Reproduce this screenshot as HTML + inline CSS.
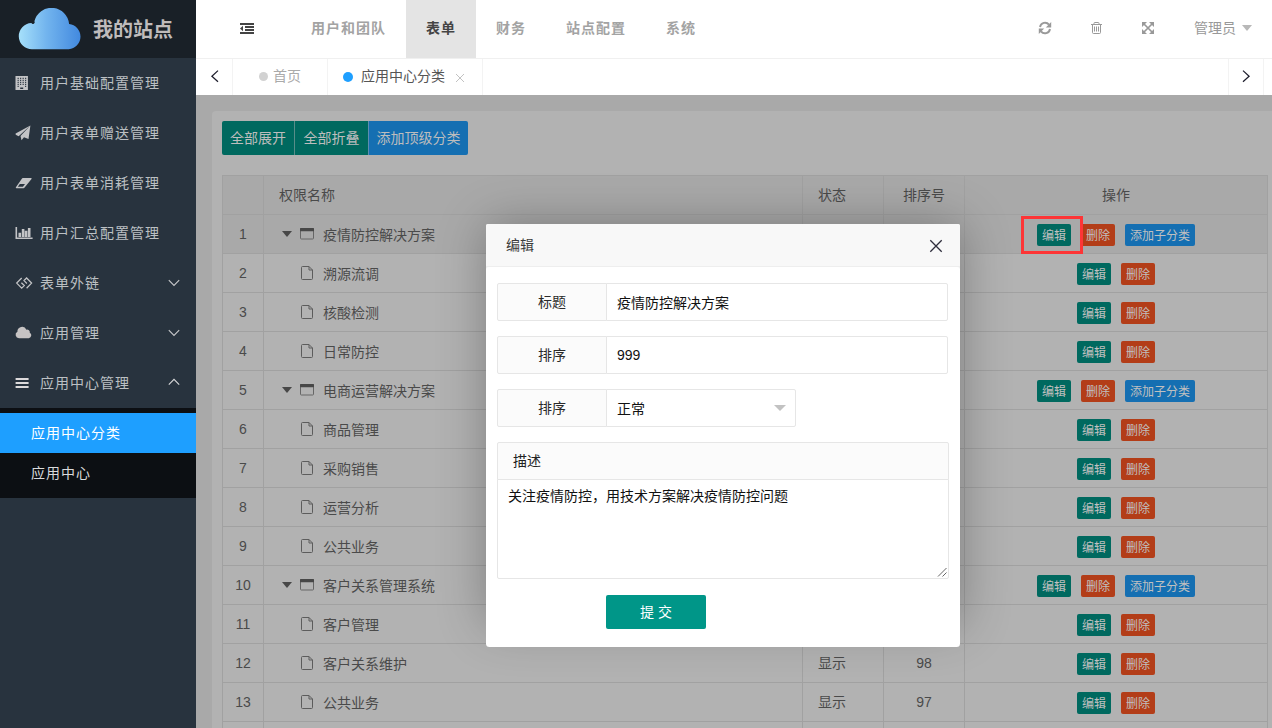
<!DOCTYPE html>
<html lang="zh-CN">
<head>
<meta charset="utf-8">
<title>我的站点</title>
<style>
*{box-sizing:border-box;margin:0;padding:0}
html,body{width:1272px;height:728px;overflow:hidden;background:#a9a9a9}
body{font-family:"Liberation Sans","Noto Sans CJK SC",sans-serif;font-size:14px;color:#333;position:relative;line-height:24px}
.abs{position:absolute}
/* sidebar */
#side{position:absolute;left:0;top:0;width:196px;height:728px;background:#28333e}
#logo{position:absolute;left:0;top:0;width:196px;height:58px;background:#192027}
#logo h1{position:absolute;left:93px;top:2px;line-height:57px;font-size:20px;font-weight:bold;color:#bfbbbb;white-space:nowrap}
.mi{position:absolute;left:0;width:196px;height:50px;line-height:50px;color:#bcc0c3;font-size:14px;letter-spacing:1px;white-space:nowrap}
.mi span{position:absolute;left:40px;top:0}
.mi svg{position:absolute}
#child{position:absolute;left:0;top:408px;width:196px;height:90px;background:#0c0f13}
.ci{position:absolute;left:0;width:196px;height:40px;line-height:40px;padding-left:31px;color:#d9dadb;font-size:14px;letter-spacing:1px}
.ci.on{background:#1e9fff;color:#fff}
/* header */
#head{position:absolute;left:196px;top:0;width:1076px;height:58px;background:#fff}
.nav{position:absolute;top:0;height:58px;line-height:57px;font-size:14px;font-weight:bold;letter-spacing:1px;color:#a3a3a3;text-align:center;white-space:nowrap}
.nav.on{background:#e4e4e4;color:#444}
/* tabs */
#tabs{position:absolute;left:196px;top:58px;width:1076px;height:37px;background:#fff;border-top:1px solid #f0f0f0}
.tab{position:absolute;top:0;height:36px;line-height:35px;border-right:1px solid #f3f3f3;font-size:14px;white-space:nowrap}
/* content (darkened by shade) */
#main{position:absolute;left:212px;top:111px;width:1060px;height:617px;background:#b2b2b2;border-radius:4px 0 0 0}
.tbtn{position:absolute;top:121px;height:34px;line-height:34px;color:#bdbdbd;font-size:14px;text-align:center;white-space:nowrap}
.g{background:#00695f}.b{background:#156fb2}.r{background:#b33d18}
table{position:absolute;left:222px;top:175px;border-collapse:collapse;table-layout:fixed;width:1045px;color:#4a4a4a;font-size:14px}
td,th{border:1px solid #a1a1a1;height:39px;padding:0 15px;font-weight:normal;text-align:left;white-space:nowrap;overflow:hidden;line-height:20px}
th{background:#a9a9a9}
td.c,th.c{text-align:center;padding:0}
.xs{display:inline-block;height:22px;line-height:24px;padding:0 5px;font-size:12px;color:#c0c0c0;border-radius:2px;vertical-align:middle;position:relative;top:1px}
.xs+.xs{margin-left:10px}
/* modal */
#modal{position:absolute;left:486px;top:224px;width:474px;height:400px;background:#f0f0f0;border-radius:2px;box-shadow:1px 1px 50px rgba(0,0,0,.3)}
#mt{position:absolute;left:0;top:0;width:474px;height:43px;background:#f8f8f8;border-bottom:1px solid #eee;border-radius:2px 2px 0 0;line-height:42px;padding-left:20px;font-size:14px;color:#3c3c3c}
.lab{position:absolute;left:11px;width:110px;height:38px;border:1px solid #e6e6e6;background:#fbfbfb;text-align:center;line-height:37px;color:#2a2a2a;border-radius:2px 0 0 2px}
.inp{position:absolute;left:120px;height:38px;border:1px solid #e6e6e6;background:#fff;line-height:36px;padding-left:10px;color:#111;border-radius:0 2px 2px 0}
td.nm{position:relative;padding:0}
td.nm span{position:absolute;left:59px;top:10px;line-height:20px}
td.nm .ti{position:absolute;top:13px}
td.nm .tri{position:absolute;left:17.7px;top:16px;width:0;height:0;border:5.7px solid transparent;border-top:6.2px solid #474747;border-bottom:0}
tr.hv td{background:#a9a9a9}
#redbox{position:absolute;left:1021px;top:216px;width:62px;height:38px;border:3px solid #fd3536}
#ta-l{position:absolute;left:11px;top:218px;width:452px;height:38px;border:1px solid #e6e6e6;background:#fbfbfb;line-height:36px;padding-left:15px;color:#222;border-radius:2px 2px 0 0}
#ta{position:absolute;left:11px;top:255px;width:452px;height:100px;border:1px solid #e6e6e6;background:#fff;line-height:20px;padding:6px 10px;color:#111;border-radius:0 0 2px 2px}
#sub{position:absolute;left:120px;top:371px;width:100px;height:34px;line-height:34px;background:#009688;color:#fff;text-align:center;border-radius:2px;font-size:14px}
</style>
</head>
<body>
<div id="side">
  <div id="logo">
    <svg class="abs" style="left:18px;top:8px" width="64" height="42" viewBox="18 8 64 42">
      <defs><linearGradient id="cg" x1="0" y1="0" x2="1" y2="0"><stop offset="0" stop-color="#a6e0fa"/><stop offset="0.45" stop-color="#72b4ee"/><stop offset="1" stop-color="#4289df"/></linearGradient></defs>
      <path transform="translate(0.65 0.36) scale(0.992 0.9927)" fill="url(#cg)" d="M32 49.3 A13.2 13.2 0 0 1 31 22.9 A1.5 1.5 0 0 0 34 21 A17.8 17.8 0 0 1 69 23.8 A12.8 12.8 0 0 1 68.6 49.3 Z"/>
    </svg>
    <h1>我的站点</h1>
  </div>
  <div class="mi" style="top:58px"><span>用户基础配置管理</span></div>
  <div class="mi" style="top:108px"><span>用户表单赠送管理</span></div>
  <div class="mi" style="top:158px"><span>用户表单消耗管理</span></div>
  <div class="mi" style="top:208px"><span>用户汇总配置管理</span></div>
  <div class="mi" style="top:258px"><span>表单外链</span></div>
  <div class="mi" style="top:308px"><span>应用管理</span></div>
  <div class="mi" style="top:358px"><span>应用中心管理</span></div>

  <svg class="abs" style="left:15px;top:75px" width="14" height="16" viewBox="15 75 14 16"><path fill="#c3c4c6" fill-rule="evenodd" d="M15.5 76h12.4v14H15.5z M17.6 77.8h1.1v1.1h-1.1z M20.1 77.8h1.1v1.1h-1.1z M22.6 77.8h1.1v1.1h-1.1z M25.1 77.8h1.1v1.1h-1.1z M17.6 79.8h1.1v1.1h-1.1z M20.1 79.8h1.1v1.1h-1.1z M22.6 79.8h1.1v1.1h-1.1z M25.1 79.8h1.1v1.1h-1.1z M17.6 81.8h1.1v1.1h-1.1z M20.1 81.8h1.1v1.1h-1.1z M22.6 81.8h1.1v1.1h-1.1z M25.1 81.8h1.1v1.1h-1.1z M17.6 83.8h1.1v1.1h-1.1z M20.1 83.8h1.1v1.1h-1.1z M22.6 83.8h1.1v1.1h-1.1z M25.1 83.8h1.1v1.1h-1.1z M17.6 85.8h1.1v1.1h-1.1z M25.1 85.8h1.1v1.1h-1.1z M20.2 87.4h3v1.6h-3z"/></svg>
  <svg class="abs" style="left:15px;top:125px" width="17" height="16" viewBox="15 125 17 16"><path fill="#c3c4c6" d="M15.6 133.5 L30.4 125.6 L20 135 L18.6 136.2 L15.7 134.8 Z M30.4 125.6 L28.5 139 L24 137.3 L21.5 140.2 L20.5 136 Z"/></svg>
  <svg class="abs" style="left:15px;top:177px" width="18" height="12" viewBox="15 177 18 12"><path fill="#c3c4c6" fill-rule="evenodd" d="M23 177.9 H31 A0.6 0.6 0 0 1 31.5 178.9 L24.4 187.8 A1 1 0 0 1 23.6 188.2 H16.4 A0.6 0.6 0 0 1 15.9 187.2 L22.2 178.3 A1 1 0 0 1 23 177.9 Z M19.8 184 H25 L22.9 186.8 H17.8 Z"/></svg>
  <svg class="abs" style="left:15px;top:226px" width="18" height="14" viewBox="15 226 18 14"><path fill="#c3c4c6" d="M15.5 227h1.6v10.6H32.6v1.4H15.5z M18.5 232.8h2.6V237h-2.6z M21.8 228.9h2.6V237h-2.6z M24.8 230.8h2.6V237h-2.6z M27.9 227.9h2.6V237h-2.6z"/></svg>
  <svg class="abs" style="left:15px;top:276px" width="18" height="14" viewBox="15 276 18 14"><path fill="none" stroke="#c3c4c6" stroke-width="1.25" d="M21.7 278 L16.7 283.1 L21.7 288.2 L24.3 285.6 L21.4 282.7 M26.6 288.2 L31.6 283.1 L26.6 278 L24 280.6 L26.9 283.5"/></svg>
  <svg class="abs" style="left:15px;top:325px" width="18" height="14" viewBox="15 325 18 14"><path fill="#c6c3c3" d="M19 338.2 A3.4 3.4 0 0 1 17.4 331.8 A4.7 4.7 0 0 1 26.4 329.7 A2.8 2.8 0 0 1 29.8 332.8 A2.9 2.9 0 0 1 28.8 338.2 Z"/></svg>
  <svg class="abs" style="left:15px;top:377px" width="14" height="12" viewBox="15 377 14 12"><path fill="#dcdadb" d="M15.6 378h13v2.1h-13z M15.6 382h13v2.1h-13z M15.6 386h13v2.1h-13z"/></svg>
  <svg class="abs" style="left:168px;top:279px" width="12" height="8" viewBox="0 0 12 8"><path fill="none" stroke="#c8c9cb" stroke-width="1.1" d="M0.8 1.2 L6 6.4 L11.2 1.2"/></svg>
  <svg class="abs" style="left:168px;top:329px" width="12" height="8" viewBox="0 0 12 8"><path fill="none" stroke="#c8c9cb" stroke-width="1.1" d="M0.8 1.2 L6 6.4 L11.2 1.2"/></svg>
  <svg class="abs" style="left:168px;top:378px" width="12" height="8" viewBox="0 0 12 8"><path fill="none" stroke="#d8d9da" stroke-width="1.1" d="M0.8 6.6 L6 1.4 L11.2 6.6"/></svg>
  <div id="child">
    <div class="ci on" style="top:5px">应用中心分类</div>
    <div class="ci" style="top:45px">应用中心</div>
  </div>
</div>

<div id="head">
  <svg class="abs" style="left:43px;top:22px" width="16" height="13" viewBox="239 22 16 13"><path fill="#444" d="M240 23h14v2h-14z M245 26h9v2h-9z M245 29h9v2h-9z M240 32h14v2h-14z M240 28.5 L243 25.8 V31.2 Z"/></svg>
  <svg class="abs" style="left:842px;top:21px" width="14" height="14" viewBox="1038 21 14 14"><g fill="none" stroke="#999" stroke-width="1.9"><path d="M1040 27 A5.1 5.1 0 0 1 1049 24.6"/><path d="M1050 29 A5.1 5.1 0 0 1 1041 31.4"/></g><path fill="#999" d="M1051.2 22 V27.4 H1045.8 Z M1038.8 34 V28.6 H1044.2 Z"/></svg>
  <svg class="abs" style="left:894px;top:21px" width="14" height="14" viewBox="1090 21 14 14"><g fill="none" stroke="#999" stroke-width="1"><path d="M1091 24.5 H1102 M1094 24.5 V23.3 A0.8 0.8 0 0 1 1094.8 22.5 H1098.2 A0.8 0.8 0 0 1 1099 23.3 V24.5 M1092.5 24.5 V32.5 A1 1 0 0 0 1093.5 33.5 H1099.5 A1 1 0 0 0 1100.5 32.5 V24.5 M1094.5 26.5 V31.5 M1096.5 26.5 V31.5 M1098.5 26.5 V31.5"/></g></svg>
  <svg class="abs" style="left:945px;top:21px" width="14" height="14" viewBox="1141 21 14 14"><path fill="#999" d="M1142 22 H1147 L1142 27 Z M1154 22 V27 L1149 22 Z M1142 34 V29 L1147 34 Z M1154 34 H1149 L1154 29 Z"/><path stroke="#999" stroke-width="1.7" d="M1144 24 L1152 32 M1152 24 L1144 32"/></svg>
  <i class="abs" style="left:1045.5px;top:25px;width:0;height:0;border:5.7px solid transparent;border-top:6px solid #b8b8b8;border-bottom:0"></i>

  <div class="nav" style="left:95px;width:115px">用户和团队</div>
  <div class="nav on" style="left:210px;width:70px">表单</div>
  <div class="nav" style="left:280px;width:70px">财务</div>
  <div class="nav" style="left:350px;width:100px">站点配置</div>
  <div class="nav" style="left:450px;width:70px">系统</div>
  <div class="nav" style="left:998px;width:42px;font-weight:normal;letter-spacing:0;color:#999">管理员</div>
</div>

<div id="tabs">
  <svg class="abs" style="left:13px;top:10px" width="12" height="16" viewBox="0 0 12 16"><path fill="none" stroke="#1d1d2c" stroke-width="1.25" d="M9 1.6 L2.9 7.2 L9 12.8"/></svg>
  <svg class="abs" style="left:1044px;top:10px" width="12" height="16" viewBox="0 0 12 16"><path fill="none" stroke="#1d1d2c" stroke-width="1.25" d="M3 1.6 L9.1 7.2 L3 12.8"/></svg>
  <i class="abs" style="left:63px;top:13px;width:9px;height:9px;border-radius:50%;background:#d2d2d2"></i>
  <i class="abs" style="left:146.5px;top:12.5px;width:10px;height:10px;border-radius:50%;background:#1e9fff"></i>
  <svg class="abs" style="left:259px;top:14px" width="10" height="10" viewBox="0 0 10 10"><path fill="none" stroke="#c2c2c2" stroke-width="1" d="M1 1 L9 9 M9 1 L1 9"/></svg>

  <div class="tab" style="left:0;width:37px"></div>
  <div class="tab" style="left:37px;width:95px;color:#aaa"><span class="abs" style="left:40px">首页</span></div>
  <div class="tab" style="left:132px;width:155px;color:#555"><span class="abs" style="left:33px">应用中心分类</span></div>
  <div class="tab" style="left:1032px;width:36px;border-left:1px solid #f3f3f3"></div>
</div>

<div id="main"></div>
<div class="tbtn g" style="left:222px;width:72px;border-radius:2px 0 0 2px">全部展开</div>
<div class="tbtn g" style="left:294px;width:74px;border-left:1px solid #598d89">全部折叠</div>
<div class="tbtn b" style="left:368px;width:100px;border-radius:0 2px 2px 0;border-left:1px solid #5c8db0">添加顶级分类</div>

<table>
<colgroup><col style="width:41px"><col style="width:539px"><col style="width:81px"><col style="width:81px"><col style="width:303px"></colgroup>
<tr><th></th><th>权限名称</th><th>状态</th><th class="c">排序号</th><th class="c">操作</th></tr>
<tr class="hv"><td class="c">1</td><td class="nm"><i class="tri"></i><svg class="ti" style="left:36px" width="14" height="12" viewBox="0 0 14 12"><rect x="0.5" y="0.5" width="13" height="10.5" rx="0.8" fill="none" stroke="#666"/><rect x="0" y="0" width="14" height="3.2" rx="0.6" fill="#474747"/></svg><span>疫情防控解决方案</span></td><td>显示</td><td class="c">999</td><td class="c"><span class="xs g">编辑</span><span class="xs r">删除</span><span class="xs b">添加子分类</span></td></tr>
<tr><td class="c">2</td><td class="nm"><svg class="ti" style="left:37px;top:12px" width="12" height="14" viewBox="0 0 12 14"><path d="M1.5 0.5 H8 L11.5 4 V12.5 A1 1 0 0 1 10.5 13.5 H1.5 A1 1 0 0 1 0.5 12.5 V1.5 A1 1 0 0 1 1.5 0.5 Z M8 0.5 V4 H11.5" fill="none" stroke="#5c5c5c"/></svg><span>溯源流调</span></td><td>显示</td><td class="c">99</td><td class="c"><span class="xs g">编辑</span><span class="xs r">删除</span></td></tr>
<tr><td class="c">3</td><td class="nm"><svg class="ti" style="left:37px;top:12px" width="12" height="14" viewBox="0 0 12 14"><path d="M1.5 0.5 H8 L11.5 4 V12.5 A1 1 0 0 1 10.5 13.5 H1.5 A1 1 0 0 1 0.5 12.5 V1.5 A1 1 0 0 1 1.5 0.5 Z M8 0.5 V4 H11.5" fill="none" stroke="#5c5c5c"/></svg><span>核酸检测</span></td><td>显示</td><td class="c">98</td><td class="c"><span class="xs g">编辑</span><span class="xs r">删除</span></td></tr>
<tr><td class="c">4</td><td class="nm"><svg class="ti" style="left:37px;top:12px" width="12" height="14" viewBox="0 0 12 14"><path d="M1.5 0.5 H8 L11.5 4 V12.5 A1 1 0 0 1 10.5 13.5 H1.5 A1 1 0 0 1 0.5 12.5 V1.5 A1 1 0 0 1 1.5 0.5 Z M8 0.5 V4 H11.5" fill="none" stroke="#5c5c5c"/></svg><span>日常防控</span></td><td>显示</td><td class="c">97</td><td class="c"><span class="xs g">编辑</span><span class="xs r">删除</span></td></tr>
<tr><td class="c">5</td><td class="nm"><i class="tri"></i><svg class="ti" style="left:36px" width="14" height="12" viewBox="0 0 14 12"><rect x="0.5" y="0.5" width="13" height="10.5" rx="0.8" fill="none" stroke="#666"/><rect x="0" y="0" width="14" height="3.2" rx="0.6" fill="#474747"/></svg><span>电商运营解决方案</span></td><td>显示</td><td class="c">998</td><td class="c"><span class="xs g">编辑</span><span class="xs r">删除</span><span class="xs b">添加子分类</span></td></tr>
<tr><td class="c">6</td><td class="nm"><svg class="ti" style="left:37px;top:12px" width="12" height="14" viewBox="0 0 12 14"><path d="M1.5 0.5 H8 L11.5 4 V12.5 A1 1 0 0 1 10.5 13.5 H1.5 A1 1 0 0 1 0.5 12.5 V1.5 A1 1 0 0 1 1.5 0.5 Z M8 0.5 V4 H11.5" fill="none" stroke="#5c5c5c"/></svg><span>商品管理</span></td><td>显示</td><td class="c">99</td><td class="c"><span class="xs g">编辑</span><span class="xs r">删除</span></td></tr>
<tr><td class="c">7</td><td class="nm"><svg class="ti" style="left:37px;top:12px" width="12" height="14" viewBox="0 0 12 14"><path d="M1.5 0.5 H8 L11.5 4 V12.5 A1 1 0 0 1 10.5 13.5 H1.5 A1 1 0 0 1 0.5 12.5 V1.5 A1 1 0 0 1 1.5 0.5 Z M8 0.5 V4 H11.5" fill="none" stroke="#5c5c5c"/></svg><span>采购销售</span></td><td>显示</td><td class="c">98</td><td class="c"><span class="xs g">编辑</span><span class="xs r">删除</span></td></tr>
<tr><td class="c">8</td><td class="nm"><svg class="ti" style="left:37px;top:12px" width="12" height="14" viewBox="0 0 12 14"><path d="M1.5 0.5 H8 L11.5 4 V12.5 A1 1 0 0 1 10.5 13.5 H1.5 A1 1 0 0 1 0.5 12.5 V1.5 A1 1 0 0 1 1.5 0.5 Z M8 0.5 V4 H11.5" fill="none" stroke="#5c5c5c"/></svg><span>运营分析</span></td><td>显示</td><td class="c">97</td><td class="c"><span class="xs g">编辑</span><span class="xs r">删除</span></td></tr>
<tr><td class="c">9</td><td class="nm"><svg class="ti" style="left:37px;top:12px" width="12" height="14" viewBox="0 0 12 14"><path d="M1.5 0.5 H8 L11.5 4 V12.5 A1 1 0 0 1 10.5 13.5 H1.5 A1 1 0 0 1 0.5 12.5 V1.5 A1 1 0 0 1 1.5 0.5 Z M8 0.5 V4 H11.5" fill="none" stroke="#5c5c5c"/></svg><span>公共业务</span></td><td>显示</td><td class="c">96</td><td class="c"><span class="xs g">编辑</span><span class="xs r">删除</span></td></tr>
<tr><td class="c">10</td><td class="nm"><i class="tri"></i><svg class="ti" style="left:36px" width="14" height="12" viewBox="0 0 14 12"><rect x="0.5" y="0.5" width="13" height="10.5" rx="0.8" fill="none" stroke="#666"/><rect x="0" y="0" width="14" height="3.2" rx="0.6" fill="#474747"/></svg><span>客户关系管理系统</span></td><td>显示</td><td class="c">997</td><td class="c"><span class="xs g">编辑</span><span class="xs r">删除</span><span class="xs b">添加子分类</span></td></tr>
<tr><td class="c">11</td><td class="nm"><svg class="ti" style="left:37px;top:12px" width="12" height="14" viewBox="0 0 12 14"><path d="M1.5 0.5 H8 L11.5 4 V12.5 A1 1 0 0 1 10.5 13.5 H1.5 A1 1 0 0 1 0.5 12.5 V1.5 A1 1 0 0 1 1.5 0.5 Z M8 0.5 V4 H11.5" fill="none" stroke="#5c5c5c"/></svg><span>客户管理</span></td><td>显示</td><td class="c">99</td><td class="c"><span class="xs g">编辑</span><span class="xs r">删除</span></td></tr>
<tr><td class="c">12</td><td class="nm"><svg class="ti" style="left:37px;top:12px" width="12" height="14" viewBox="0 0 12 14"><path d="M1.5 0.5 H8 L11.5 4 V12.5 A1 1 0 0 1 10.5 13.5 H1.5 A1 1 0 0 1 0.5 12.5 V1.5 A1 1 0 0 1 1.5 0.5 Z M8 0.5 V4 H11.5" fill="none" stroke="#5c5c5c"/></svg><span>客户关系维护</span></td><td>显示</td><td class="c">98</td><td class="c"><span class="xs g">编辑</span><span class="xs r">删除</span></td></tr>
<tr><td class="c">13</td><td class="nm"><svg class="ti" style="left:37px;top:12px" width="12" height="14" viewBox="0 0 12 14"><path d="M1.5 0.5 H8 L11.5 4 V12.5 A1 1 0 0 1 10.5 13.5 H1.5 A1 1 0 0 1 0.5 12.5 V1.5 A1 1 0 0 1 1.5 0.5 Z M8 0.5 V4 H11.5" fill="none" stroke="#5c5c5c"/></svg><span>公共业务</span></td><td>显示</td><td class="c">97</td><td class="c"><span class="xs g">编辑</span><span class="xs r">删除</span></td></tr>
<tr><td class="c">14</td><td class="nm"><i class="tri"></i><svg class="ti" style="left:36px" width="14" height="12" viewBox="0 0 14 12"><rect x="0.5" y="0.5" width="13" height="10.5" rx="0.8" fill="none" stroke="#666"/><rect x="0" y="0" width="14" height="3.2" rx="0.6" fill="#474747"/></svg><span>协同办公管理系统</span></td><td>显示</td><td class="c">996</td><td class="c"><span class="xs g">编辑</span><span class="xs r">删除</span><span class="xs b">添加子分类</span></td></tr>
</table>

<div id="modal">
  <div id="mt">编辑</div>
  <div class="abs" style="left:0;top:43px;width:474px;height:380px;background:#fff;border-radius:3px 3px 3.5px 3.5px"></div>
  <div class="lab" style="top:59px">标题</div><div class="inp" style="top:59px;width:342px;line-height:38px">疫情防控解决方案</div>
  <div class="lab" style="top:112px">排序</div><div class="inp" style="top:112px;width:342px">999</div>
  <div class="lab" style="top:165px">排序</div><div class="inp" style="top:165px;width:190px;line-height:38px">正常</div>
  <div id="ta-l">描述</div>
  <div id="ta">关注疫情防控，用技术方案解决疫情防控问题<svg class="abs" style="right:1px;bottom:1px" width="10" height="10" viewBox="0 0 10 10"><path d="M9.5 1 L1 9.5 M9.5 5.5 L5.5 9.5" stroke="#666" stroke-width="1" fill="none"/></svg></div>
  <div id="sub">提 交</div>
  <svg class="abs" style="left:443px;top:15px" width="14" height="14" viewBox="0 0 14 14"><path d="M1.3 1.3 L12.7 12.7 M12.7 1.3 L1.3 12.7" stroke="#2e2d3c" stroke-width="1.3" fill="none"/></svg>
  <i class="abs" style="left:288px;top:181px;width:0;height:0;border:6px solid transparent;border-top-color:#c2c2c2;border-bottom:0"></i>
</div>
<div id="redbox"></div>
</body>
</html>
